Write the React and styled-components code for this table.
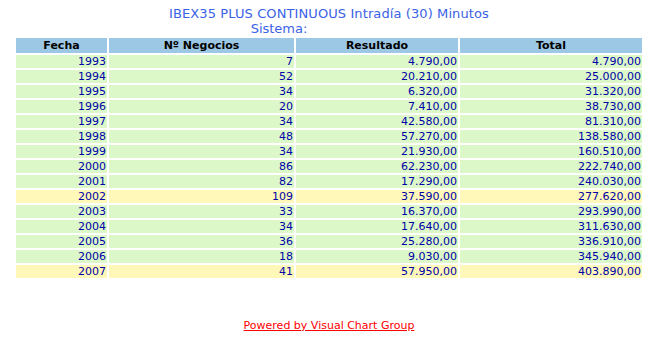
import React from "react";
import styled, { createGlobalStyle } from "styled-components";

const Global = createGlobalStyle`
  html, body { margin: 0; padding: 0; background: #fff; }
  body { font-family: Verdana, "DejaVu Sans", sans-serif; }
`;

const Page = styled.div`
  padding: 6px 14px 0 14px;
  width: 630px;
`;

const Title = styled.div`
  color: #3a62e6;
  font-size: 13px;
  line-height: 16px;
  text-align: center;
  letter-spacing: 0.1px;
`;

const SubTitle = styled.div`
  color: #3a62e6;
  font-size: 13px;
  line-height: 14px;
  text-align: center;
  padding-right: 100px;
`;

const Table = styled.table`
  width: 630px;
  border-collapse: separate;
  border-spacing: 2px;
  font-size: 11px;
  margin-top: 0;
`;

const Th = styled.th`
  background: #9dc8e5;
  color: #000;
  font-weight: bold;
  height: 15px;
  padding: 0;
  line-height: 13px;
  text-align: center;
  width: ${(p) => p.$w}px;
`;

const Td = styled.td`
  background: ${(p) => (p.$hl ? "#fff8b8" : "#dcf8c8")};
  color: #0000a8;
  text-align: right;
  padding: 0 1px 0 0;
  height: 13px;
  line-height: 13px;
`;

const Footer = styled.div`
  text-align: center;
  margin-top: 39px;
  font-size: 11px;
`;

const Link = styled.a`
  color: #f00;
  text-decoration: underline;
`;

const rows = [
  ["1993", "7", "4.790,00", "4.790,00"],
  ["1994", "52", "20.210,00", "25.000,00"],
  ["1995", "34", "6.320,00", "31.320,00"],
  ["1996", "20", "7.410,00", "38.730,00"],
  ["1997", "34", "42.580,00", "81.310,00"],
  ["1998", "48", "57.270,00", "138.580,00"],
  ["1999", "34", "21.930,00", "160.510,00"],
  ["2000", "86", "62.230,00", "222.740,00"],
  ["2001", "82", "17.290,00", "240.030,00"],
  ["2002", "109", "37.590,00", "277.620,00", true],
  ["2003", "33", "16.370,00", "293.990,00"],
  ["2004", "34", "17.640,00", "311.630,00"],
  ["2005", "36", "25.280,00", "336.910,00"],
  ["2006", "18", "9.030,00", "345.940,00"],
  ["2007", "41", "57.950,00", "403.890,00", true],
];

export default function App() {
  return (
    <>
      <Global />
      <Page>
        <Title>IBEX35 PLUS CONTINUOUS Intradía (30) Minutos</Title>
        <SubTitle>Sistema:</SubTitle>
        <Table>
          <thead>
            <tr>
              <Th $w={91}>Fecha</Th>
              <Th $w={185}>Nº Negocios</Th>
              <Th $w={162}>Resultado</Th>
              <Th $w={182}>Total</Th>
            </tr>
          </thead>
          <tbody>
            {rows.map((r) => (
              <tr key={r[0]}>
                <Td $hl={r[4]}>{r[0]}</Td>
                <Td $hl={r[4]}>{r[1]}</Td>
                <Td $hl={r[4]}>{r[2]}</Td>
                <Td $hl={r[4]}>{r[3]}</Td>
              </tr>
            ))}
          </tbody>
        </Table>
        <Footer>
          <Link href="#">Powered by Visual Chart Group</Link>
        </Footer>
      </Page>
    </>
  );
}
